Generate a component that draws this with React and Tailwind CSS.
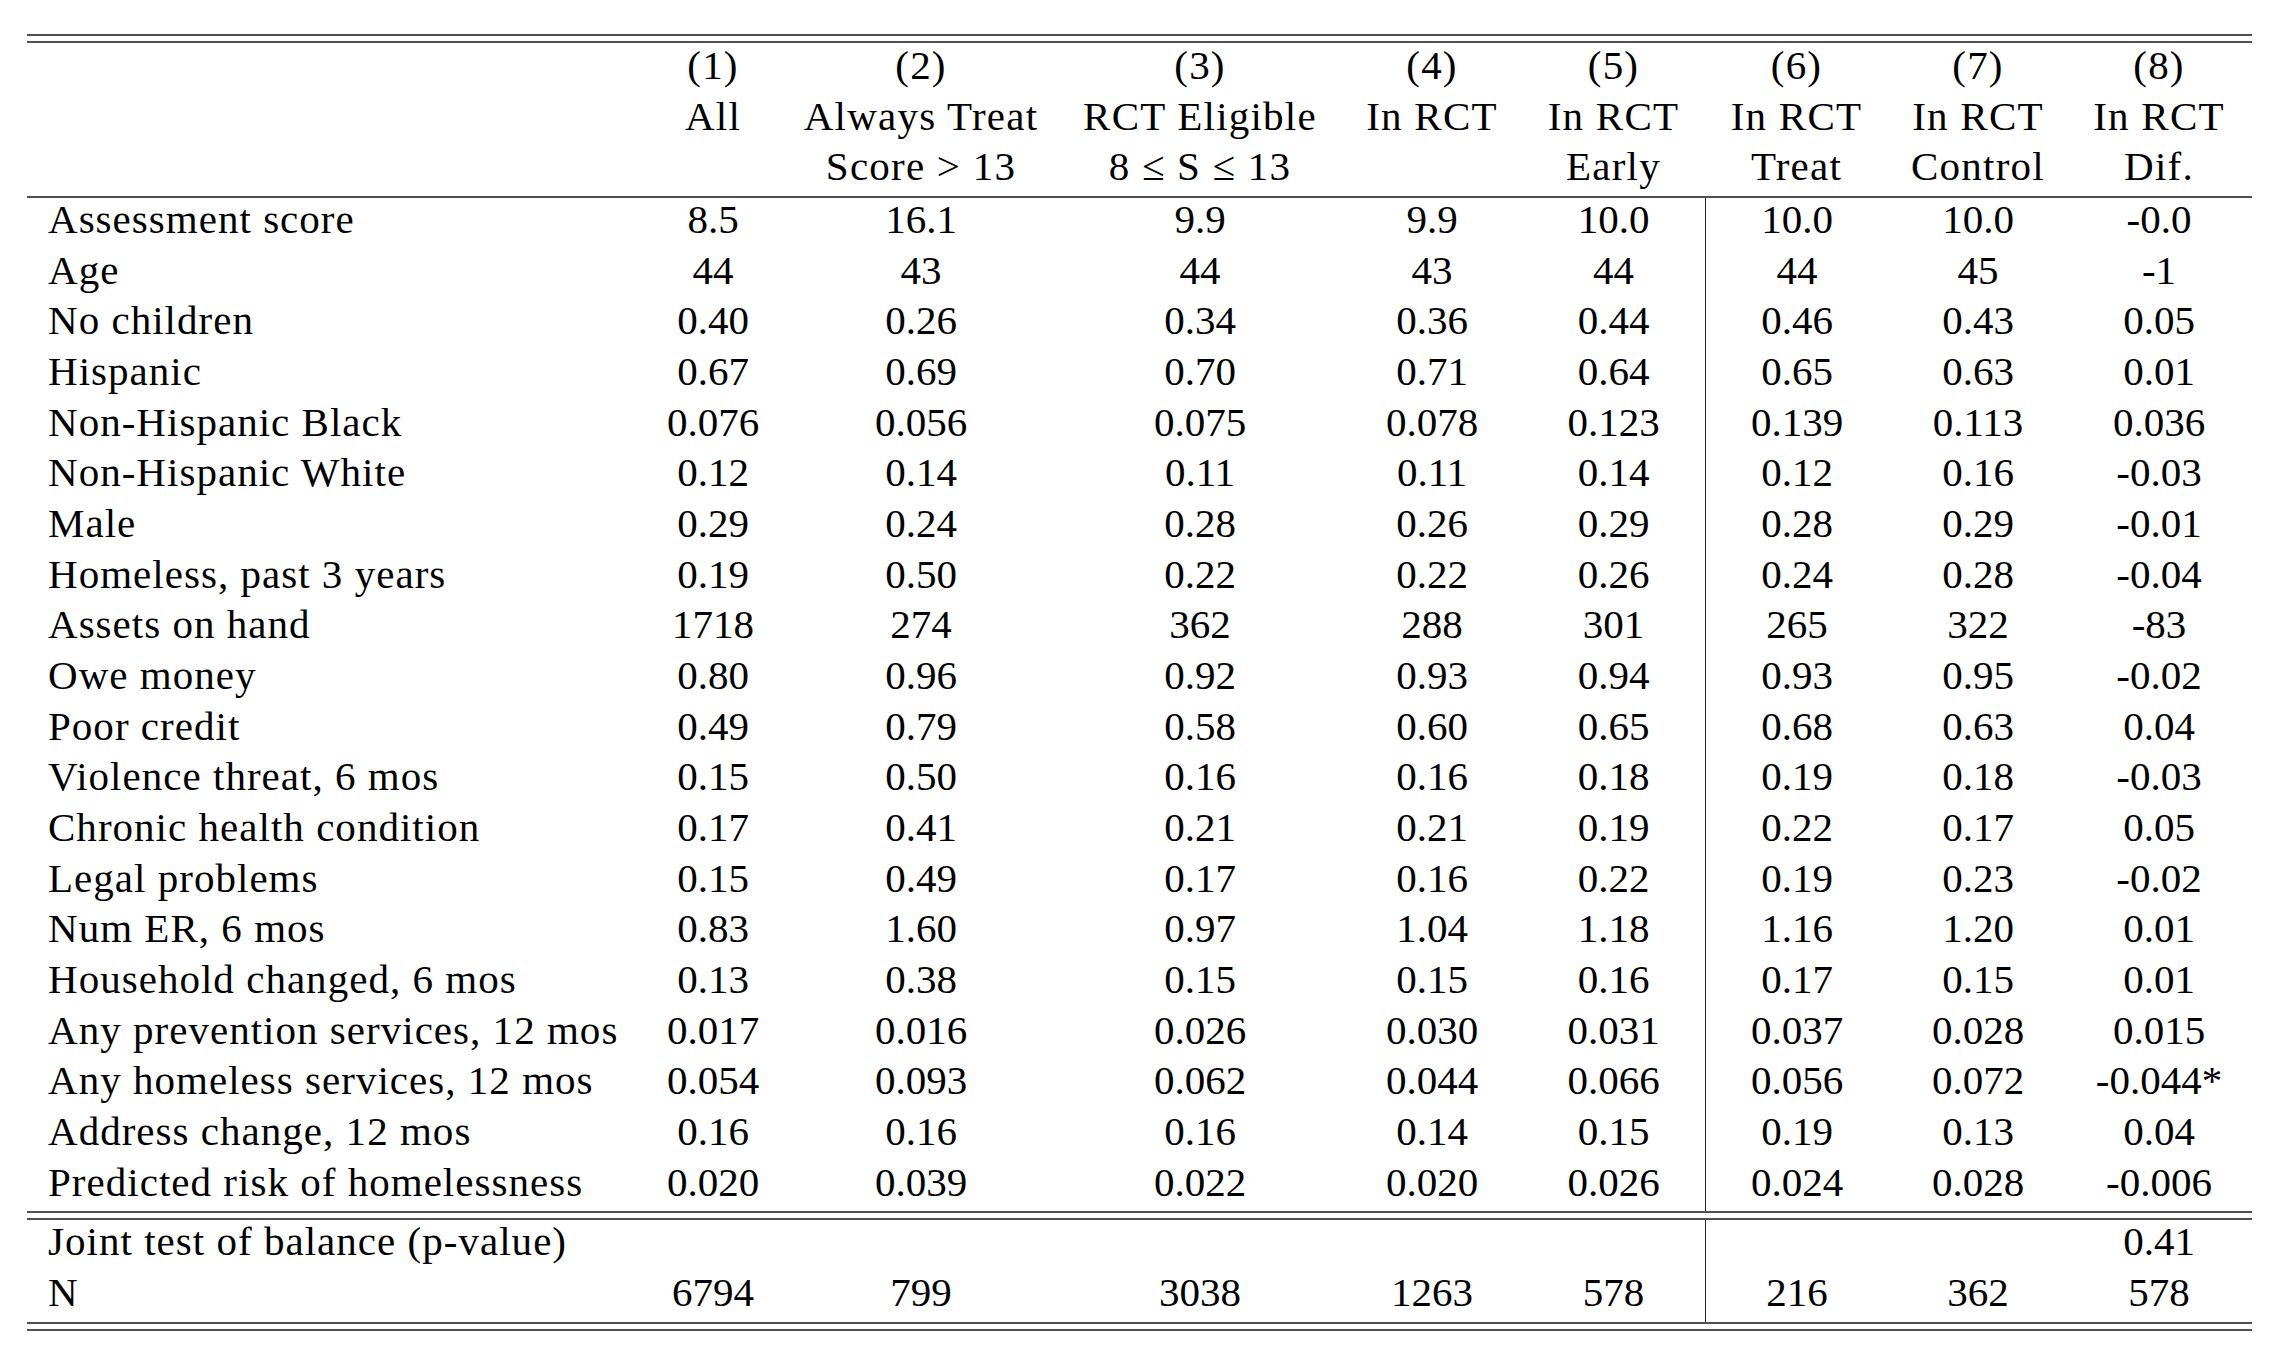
import React from "react";

const COLS =
  "grid grid-cols-[615px_142px_274px_284px_180px_183px_183px_180px_182px]";

const header = [
  ["", "(1)", "(2)", "(3)", "(4)", "(5)", "(6)", "(7)", "(8)"],
  ["", "All", "Always Treat", "RCT Eligible", "In RCT", "In RCT", "In RCT", "In RCT", "In RCT"],
  ["", "", "Score > 13", "8 \u2264 S \u2264 13", "", "Early", "Treat", "Control", "Dif."],
];

const body = [
  ["Assessment score", "8.5", "16.1", "9.9", "9.9", "10.0", "10.0", "10.0", "-0.0"],
  ["Age", "44", "43", "44", "43", "44", "44", "45", "-1"],
  ["No children", "0.40", "0.26", "0.34", "0.36", "0.44", "0.46", "0.43", "0.05"],
  ["Hispanic", "0.67", "0.69", "0.70", "0.71", "0.64", "0.65", "0.63", "0.01"],
  ["Non-Hispanic Black", "0.076", "0.056", "0.075", "0.078", "0.123", "0.139", "0.113", "0.036"],
  ["Non-Hispanic White", "0.12", "0.14", "0.11", "0.11", "0.14", "0.12", "0.16", "-0.03"],
  ["Male", "0.29", "0.24", "0.28", "0.26", "0.29", "0.28", "0.29", "-0.01"],
  ["Homeless, past 3 years", "0.19", "0.50", "0.22", "0.22", "0.26", "0.24", "0.28", "-0.04"],
  ["Assets on hand", "1718", "274", "362", "288", "301", "265", "322", "-83"],
  ["Owe money", "0.80", "0.96", "0.92", "0.93", "0.94", "0.93", "0.95", "-0.02"],
  ["Poor credit", "0.49", "0.79", "0.58", "0.60", "0.65", "0.68", "0.63", "0.04"],
  ["Violence threat, 6 mos", "0.15", "0.50", "0.16", "0.16", "0.18", "0.19", "0.18", "-0.03"],
  ["Chronic health condition", "0.17", "0.41", "0.21", "0.21", "0.19", "0.22", "0.17", "0.05"],
  ["Legal problems", "0.15", "0.49", "0.17", "0.16", "0.22", "0.19", "0.23", "-0.02"],
  ["Num ER, 6 mos", "0.83", "1.60", "0.97", "1.04", "1.18", "1.16", "1.20", "0.01"],
  ["Household changed, 6 mos", "0.13", "0.38", "0.15", "0.15", "0.16", "0.17", "0.15", "0.01"],
  ["Any prevention services, 12 mos", "0.017", "0.016", "0.026", "0.030", "0.031", "0.037", "0.028", "0.015"],
  ["Any homeless services, 12 mos", "0.054", "0.093", "0.062", "0.044", "0.066", "0.056", "0.072", "-0.044*"],
  ["Address change, 12 mos", "0.16", "0.16", "0.16", "0.14", "0.15", "0.19", "0.13", "0.04"],
  ["Predicted risk of homelessness", "0.020", "0.039", "0.022", "0.020", "0.026", "0.024", "0.028", "-0.006"],
];

const footer = [
  ["Joint test of balance (p-value)", "", "", "", "", "", "", "", "0.41"],
  ["N", "6794", "799", "3038", "1263", "578", "216", "362", "578"],
];

function Rule() {
  return <div className="h-[2px] w-[2225px] bg-[#505050]" />;
}

function DoubleRule() {
  return (
    <div className="flex flex-col gap-[5px]">
      <Rule />
      <Rule />
    </div>
  );
}

function Row({ cells, vline }) {
  return (
    <div className={COLS + " h-[50.68px]"}>
      {cells.map((c, i) => {
        if (i === 0) {
          return (
            <div
              key={i}
              className="pl-[21px] leading-[43px] whitespace-nowrap tracking-[0.025em] text-left"
            >
              {c}
            </div>
          );
        }
        const border = vline && i === 6 ? " border-l border-[#222222]" : "";
        return (
          <div
            key={i}
            className={"text-center leading-[43px] whitespace-nowrap" + border}
          >
            {c}
          </div>
        );
      })}
    </div>
  );
}

function HeaderRow({ cells }) {
  return (
    <div className={COLS + " h-[50.68px]"}>
      {cells.map((c, i) => (
        <div
          key={i}
          className="text-center leading-[43px] whitespace-nowrap tracking-[0.03em]"
        >
          {c}
        </div>
      ))}
    </div>
  );
}

export default function App() {
  return (
    <div className="w-[2296px] h-[1350px] bg-white text-black font-['Liberation_Serif',serif] text-[41px]">
      <div className="ml-[27px] pt-[34px] flex flex-col">
        <DoubleRule />
        <div className="mt-[1px]">
          {header.map((r, i) => (
            <HeaderRow key={i} cells={r} />
          ))}
        </div>
        <Rule />
        <div>
          {body.map((r, i) => (
            <Row key={i} cells={r} vline />
          ))}
        </div>
        <DoubleRule />
        <div>
          {footer.map((r, i) => (
            <Row key={i} cells={r} vline />
          ))}
        </div>
        <DoubleRule />
      </div>
    </div>
  );
}
